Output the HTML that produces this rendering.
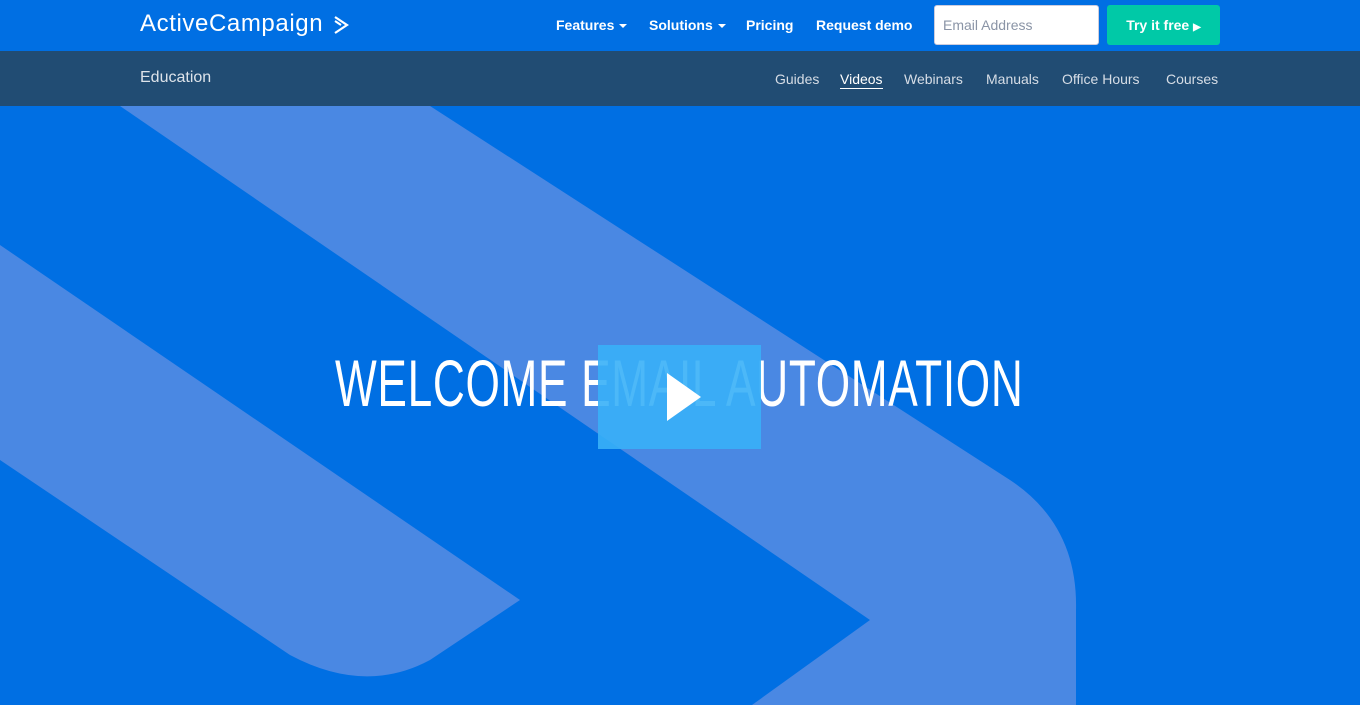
<!DOCTYPE html>
<html><head><meta charset="utf-8"><style>
*{margin:0;padding:0;box-sizing:border-box}
body{width:1360px;height:705px;overflow:hidden;font-family:"Liberation Sans",sans-serif;background:#006fe3;position:relative}
.top{position:absolute;left:0;top:0;width:1360px;height:51px;background:#006fe3}
.logo{position:absolute;left:140px;top:10px;color:#fff;font-size:24px;letter-spacing:0.6px}
.nav a{position:absolute;top:17px;color:#fff;font-weight:bold;font-size:14px;text-decoration:none}
.caret{display:inline-block;width:0;height:0;border-left:4px solid transparent;border-right:4px solid transparent;border-top:4px solid #fff;vertical-align:middle;margin-left:5px}
.email{position:absolute;left:934px;top:5px;width:165px;height:40px;background:#fff;border-radius:3px;border:1px solid #ccd;color:#8a94a6;font-size:14px;padding:11px 8px}
.try{position:absolute;left:1107px;top:5px;width:113px;height:40px;background:#00c9a7;border-radius:3px;color:#fff;font-weight:bold;font-size:14px;padding-top:12px;text-align:center}
.sub{position:absolute;left:0;top:51px;width:1360px;height:55px;background:#214c73}
.sub .ed{position:absolute;left:140px;top:18px;color:#dde3ea;font-size:16px}
.sub a{position:absolute;top:20px;color:#d6dde6;font-size:14px;text-decoration:none}
.title{position:absolute;left:335px;top:345px;color:#fff;font-size:66px;white-space:nowrap;transform-origin:0 0;transform:scaleX(0.67);letter-spacing:1px}
.play{position:absolute;left:598px;top:345px;width:163px;height:104px;background:rgba(56,176,247,0.9)}
.tri{position:absolute;left:69px;top:28px;width:0;height:0;border-top:24px solid transparent;border-bottom:24px solid transparent;border-left:34px solid #fff}
</style></head><body>
<svg style="position:absolute;left:0;top:106px" width="1360" height="599" viewBox="0 106 1360 599">
<path d="M120 106 L430 106 L1010 480 Q1078 525 1076 610 L1076 705 L752 705 L870 620 Z" fill="#4a88e3"/>
<path d="M0 245 L520 600 L430 660 Q365 695 290 655 L0 460 Z" fill="#4a88e3"/>
</svg>
<div class="top">
<div class="logo">ActiveCampaign</div>
<svg style="position:absolute;left:333px;top:15px" width="16" height="20" viewBox="0 0 16 20"><path d="M2 2 L14 10 L2 18" fill="none" stroke="#fff" stroke-width="2.2"/><path d="M2 6 L8 10" stroke="#fff" stroke-width="2"/></svg>
<div class="nav">
<a style="left:556px">Features<span class="caret"></span></a>
<a style="left:649px">Solutions<span class="caret"></span></a>
<a style="left:746px">Pricing</a>
<a style="left:816px">Request demo</a>
</div>
<div class="email">Email Address</div>
<div class="try">Try it free <span style="font-size:10px">▶</span></div>
</div>
<div class="sub">
<div class="ed">Education</div>
<a style="left:775px">Guides</a>
<a style="left:840px;color:#fff;border-bottom:1px solid #fff;padding-bottom:1px">Videos</a>
<a style="left:904px">Webinars</a>
<a style="left:986px">Manuals</a>
<a style="left:1062px">Office Hours</a>
<a style="left:1166px">Courses</a>
</div>
<div class="title">WELCOME EMAIL AUTOMATION</div>
<div class="play"><div class="tri"></div></div>
</body></html>
